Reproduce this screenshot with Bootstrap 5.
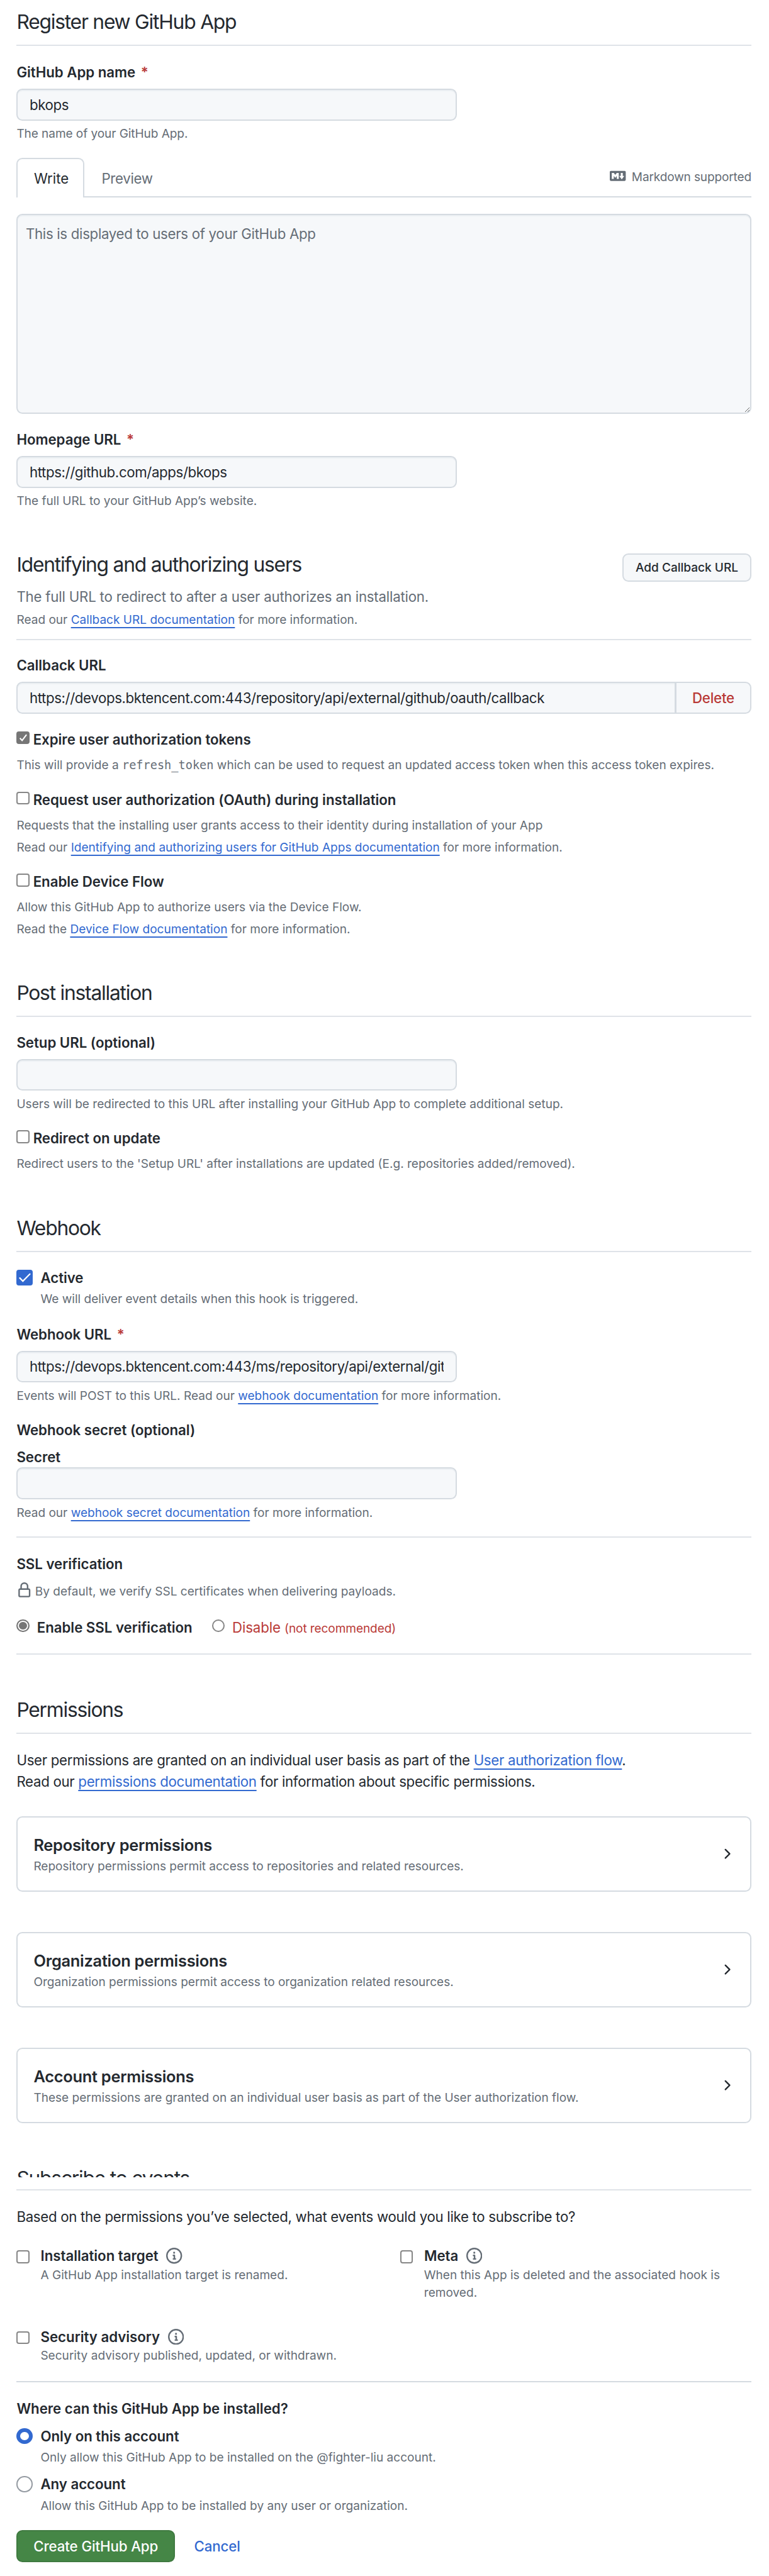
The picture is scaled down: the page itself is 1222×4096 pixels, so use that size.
<!DOCTYPE html>
<html lang="en">
<head>
<meta charset="utf-8">
<meta name="viewport" content="width=device-width, initial-scale=1">
<title>Register new GitHub App</title>
<link href="https://cdn.jsdelivr.net/npm/bootstrap@5.3.0/dist/css/bootstrap.min.css" rel="stylesheet">
<style>
  :root { --ink:#24292f; --muted:#656d76; --line:#d5dbe1; --soft:#dfe3e8; --blue:#3269d0; --danger:#b93a37; --inset:#f6f8fa; }
  body { font-family:Inter, "Liberation Sans", sans-serif; font-size:22.24px; line-height:33px; color:var(--ink); background:#fff; }
  .page { padding:11px 28px 0 26.4px; height:4096px; overflow:hidden; }
  .page p { margin-bottom:0; }
  .page a { color:var(--blue); text-decoration:underline 1.59px; text-underline-offset:4.6px; text-decoration-skip-ink:none; }
  .page a.plain { text-decoration:none; }

  /* headings */
  .sec-title { font-size:31.78px; line-height:48px; font-weight:400; letter-spacing:-1.22px; margin:0; }
  .sec-head { border-bottom:2px solid var(--soft); padding-bottom:12px; }
  .sec-head.spaced { margin-top:63.3px; }
  .sec-head.late { margin-top:64px; }
  .sec-head.cut { margin-top:44.3px; padding-bottom:18.9px; }
  .cut-title { height:41.1px; overflow:hidden; padding-top:18.9px; }
  .sec-sub { color:var(--muted); margin-top:9.3px; letter-spacing:-.2px; }
  .split { border-bottom:2px solid var(--soft); }
  .split.firm { border-color:var(--line); }

  /* text styles */
  .lbl { font-weight:600; line-height:33px; display:block; margin:0; letter-spacing:-.02px; }
  .hint { font-size:19.07px; line-height:29px; color:var(--muted); }
  .req { color:var(--danger); margin-left:3px; }
  .hint code { font:18.6px/1 "DejaVu Sans Mono", monospace; color:inherit; }
  .under { margin-top:6.4px; }
  .tight { letter-spacing:-.08px; }
  .danger-text { color:var(--danger); letter-spacing:-.1px; }
  .danger-text span { font-size:19.07px; line-height:1; }

  /* form controls */
  .form-control { height:50.8px; border:2px solid var(--line); border-radius:9.5px; background:var(--inset); color:var(--ink); font-size:22.24px; letter-spacing:-.37px; padding:0 19px 0 18.5px; box-shadow:inset 0 2px 0 rgba(208,215,222,.25); }
  .field .form-control { margin-top:9.8px; width:699.4px; }
  .field .form-control.flush { margin-top:.3px; }
  textarea.form-control { height:317.6px; margin-top:25.7px; padding:12.9px 12.5px; letter-spacing:-.3px; line-height:33px; }
  textarea.form-control::placeholder { color:#656d76; opacity:1; }
  .form-check-input { width:20.66px; height:20.66px; margin:4px 0 0; float:none; flex:none; border:2px solid #868686; background-color:#fff; }
  .form-check-input[type=checkbox] { border-radius:4px; }
  .form-check-input.gray:checked { background-color:#767676; border-color:#767676; }
  .form-check-input.gray[type=checkbox]:checked { background-image:url("data:image/svg+xml,%3csvg xmlns='http://www.w3.org/2000/svg' viewBox='0 0 20 20'%3e%3cpath fill='none' stroke='%23fff' stroke-width='2.6' d='M3.4 11l4.3 4.6L16.4 4'/%3e%3c/svg%3e"); }
  .form-check-input.gray[type=radio]:checked { background-image:none; box-shadow:inset 0 0 0 2px #fff; }
  .form-check-input.big { width:25.4px; height:25.4px; border-color:#959ba2; }
  .form-check-input.big:checked { background-color:var(--blue); border-color:var(--blue); }
  .form-check-input.big[type=checkbox]:checked { background-image:url("data:image/svg+xml,%3csvg xmlns='http://www.w3.org/2000/svg' viewBox='0 0 20 20'%3e%3cpath fill='none' stroke='%23fff' stroke-width='2.1' stroke-linecap='round' d='M2.4 10.6l4.6 4.7L17.6 4.6'/%3e%3c/svg%3e"); }
  .form-check-input.big[type=radio]:checked { background-image:none; background-color:#fff; border-width:6.36px; }
  .tick { display:flex; gap:5.6px; }
  .tick.wide { gap:11.7px; }
  .tick.big-gap { gap:12.6px; }
  .indent { padding-left:38px; }

  /* write / preview tabs */
  .tabs-bar { margin-top:23.8px; height:63.3px; }
  .tabs-bar .nav-tabs { height:63.3px; border-bottom:2px solid var(--line); }
  .tabs-bar .nav-link { height:63.3px; border:2px solid transparent; border-bottom:0; border-radius:9.5px 9.5px 0 0; color:var(--muted); padding:13.8px 25.5px 0; letter-spacing:-.3px; margin:0; }
  .tabs-bar .nav-link.active { width:107.5px; color:var(--ink); letter-spacing:0; background:#fff; border-color:var(--line); }
  .md-note { gap:9px; letter-spacing:-.15px; height:57px; padding-top:3.2px; }
  .md-note svg { margin-top:-2.5px; }

  /* buttons */
  .btn { font-size:22.24px; font-weight:500; border-radius:9.5px; padding:0; border-width:2px; }
  .btn-add { margin-top:6.2px; width:205px; height:44.5px; font-size:19.07px; background:var(--inset); border-color:var(--line); color:var(--ink); line-height:40px; }
  .btn-del { width:121px; background:var(--inset); border-color:var(--line); color:var(--danger); letter-spacing:-.2px; }
  .btn-go { width:251.7px; height:50.8px; background:#458646; border-color:#3f7a40; color:#fff; letter-spacing:-.09px; }
  .btn-txt { border:0; color:var(--blue); margin-left:30.4px; letter-spacing:-.1px; }

  /* permission cards */
  .perm { height:120.5px; border:2px solid var(--line); border-radius:9.5px; padding:24.9px 24.3px 0 25px; margin-top:63.6px; }
  .perm.first { margin-top:38.6px; }
  .perm h3 { font-size:25.42px; line-height:38px; font-weight:600; letter-spacing:-.27px; margin:0; }
  .perm .hint { letter-spacing:-.02px; }
  .perm svg { margin-top:20.6px; }
  .perm-intro { line-height:33.37px; letter-spacing:-.3px; }

  /* events */
  .ev-first { width:609.4px; flex:none; }
  .ev-row { margin-top:28.9px; }
  .ev-row.next { margin-top:37.9px; }
  .ev .form-check-input { margin-top:7.9px; }
  .ev .lbl { margin-left:17.5px; }
  .ev svg { margin:4.1px 0 0 12.6px; color:var(--muted); }
  .ev .hint { line-height:28.6px; margin-top:.6px; }

  .g36 { margin-top:3.6px; } .g6 { margin-top:6px; } .g99 { margin-top:9.9px; }
  .g11 { margin-top:11px; } .g13 { margin-top:13px; }
  .g235 { margin-top:23.5px; } .g24 { margin-top:24.3px; } .g25 { margin-top:25.3px; }
  .radio-row { gap:31px; }
  svg { fill:currentColor; flex:none; display:block; }
</style>
</head>
<body>
<main class="page container-fluid">
  <div class="sec-head"><h2 class="sec-title">Register new GitHub App</h2></div>

  <div class="field g25">
    <label class="lbl">GitHub App name <span class="req">*</span></label>
    <input class="form-control" type="text" value="bkops">
    <p class="hint under tight">The name of your GitHub App.</p>
  </div>

  <div class="tabs-bar">
    <ul class="nav nav-tabs">
      <li class="nav-item"><a class="nav-link active plain" href="#">Write</a></li>
      <li class="nav-item"><a class="nav-link plain" href="#">Preview</a></li>
      <li class="md-note hint ms-auto d-flex align-items-center">
        <svg width="25.4" height="25.4" viewBox="0 0 16 16"><path d="M14.85 3c.63 0 1.15.52 1.14 1.15v7.7c0 .63-.51 1.15-1.15 1.15H1.15C.52 13 0 12.48 0 11.84V4.15C0 3.52.52 3 1.15 3ZM9 11V5H7L5.5 7 4 5H2v6h2V8l1.5 1.92L7 8v3Zm2.99.5L14.5 8H13V5h-2v3H9.5Z"/></svg>
        <span>Markdown supported</span>
      </li>
    </ul>
  </div>
  <textarea class="form-control" placeholder="This is displayed to users of your GitHub App"></textarea>

  <div class="field g24">
    <label class="lbl">Homepage URL <span class="req">*</span></label>
    <input class="form-control" type="text" value="https://github.com/apps/bkops">
    <p class="hint under">The full URL to your GitHub App’s website.</p>
  </div>

  <div class="sec-head spaced d-flex justify-content-between align-items-start">
    <div>
      <h2 class="sec-title">Identifying and authorizing users</h2>
      <p class="sec-sub">The full URL to redirect to after a user authorizes an installation.</p>
      <p class="hint under mb-1">Read our <a href="#">Callback URL documentation</a> for more information.</p>
    </div>
    <button class="btn btn-add" type="button">Add Callback URL</button>
  </div>

  <div class="g235">
    <label class="lbl">Callback URL</label>
    <div class="input-group g99">
      <input class="form-control" type="text" value="https://devops.bktencent.com:443/repository/api/external/github/oauth/callback">
      <button class="btn btn-del" type="button">Delete</button>
    </div>
  </div>

  <div class="g235">
    <label class="tick"><input class="form-check-input gray" type="checkbox" checked><span class="lbl">Expire user authorization tokens</span></label>
    <p class="hint g99">This will provide a <code>refresh_token</code> which can be used to request an updated access token when this access token expires.</p>
  </div>
  <div class="g24">
    <label class="tick"><input class="form-check-input" type="checkbox"><span class="lbl">Request user authorization (OAuth) during installation</span></label>
    <p class="hint g99">Requests that the installing user grants access to their identity during installation of your App</p>
    <p class="hint g6">Read our <a href="#">Identifying and authorizing users for GitHub Apps documentation</a> for more information.</p>
  </div>
  <div class="g235">
    <label class="tick"><input class="form-check-input" type="checkbox"><span class="lbl">Enable Device Flow</span></label>
    <p class="hint g99">Allow this GitHub App to authorize users via the Device Flow.</p>
    <p class="hint g6">Read the <a href="#">Device Flow documentation</a> for more information.</p>
  </div>

  <div class="sec-head spaced"><h2 class="sec-title">Post installation</h2></div>
  <div class="field g235">
    <label class="lbl">Setup URL (optional)</label>
    <input class="form-control" type="text">
    <p class="hint under">Users will be redirected to this URL after installing your GitHub App to complete additional setup.</p>
  </div>
  <div class="g235">
    <label class="tick"><input class="form-check-input" type="checkbox"><span class="lbl">Redirect on update</span></label>
    <p class="hint g99">Redirect users to the 'Setup URL' after installations are updated (E.g. repositories added/removed).</p>
  </div>

  <div class="sec-head spaced"><h2 class="sec-title">Webhook</h2></div>
  <div class="g24">
    <label class="tick big-gap"><input class="form-check-input big" type="checkbox" checked><span class="lbl">Active</span></label>
    <p class="hint indent g36">We will deliver event details when this hook is triggered.</p>
  </div>
  <div class="field g24">
    <label class="lbl">Webhook URL <span class="req">*</span></label>
    <input class="form-control" type="text" value="https://devops.bktencent.com:443/ms/repository/api/external/github/webhook">
    <p class="hint under">Events will POST to this URL. Read our <a href="#">webhook documentation</a> for more information.</p>
  </div>
  <div class="field g235">
    <span class="lbl">Webhook secret (optional)</span>
    <label class="lbl g99">Secret</label>
    <input class="form-control flush" type="text">
    <p class="hint under">Read our <a href="#">webhook secret documentation</a> for more information.</p>
  </div>
  <div class="split g235"></div>

  <div class="g25">
    <span class="lbl">SSL verification</span>
    <div class="hint d-flex gap-1 g13">
      <svg width="25.4" height="25.4" viewBox="0 0 16 16"><path d="M4 4a4 4 0 0 1 8 0v2h.25c.966 0 1.75.784 1.75 1.75v5.5A1.75 1.75 0 0 1 12.25 15h-8.5A1.75 1.75 0 0 1 2 13.25v-5.5C2 6.784 2.784 6 3.75 6H4Zm8.25 3.5h-8.5a.25.25 0 0 0-.25.25v5.5c0 .138.112.25.25.25h8.5a.25.25 0 0 0 .25-.25v-5.5a.25.25 0 0 0-.25-.25ZM10.5 6V4a2.5 2.5 0 1 0-5 0v2Z"/></svg>
      <span>By default, we verify SSL certificates when delivering payloads.</span>
    </div>
    <div class="d-flex g25 radio-row">
      <label class="tick wide"><input class="form-check-input gray" type="radio" name="ssl" checked><span class="lbl">Enable SSL verification</span></label>
      <label class="tick wide"><input class="form-check-input" type="radio" name="ssl"><span class="danger-text">Disable <span>(not recommended)</span></span></label>
    </div>
  </div>
  <div class="split g25"></div>

  <div class="sec-head late"><h2 class="sec-title">Permissions</h2></div>
  <p class="g25 perm-intro">User permissions are granted on an individual user basis as part of the <a href="#">User authorization flow</a>.<br>Read our <a href="#">permissions documentation</a> for information about specific permissions.</p>

  <section class="perm first d-flex justify-content-between">
    <div><h3>Repository permissions</h3><p class="hint">Repository permissions permit access to repositories and related resources.</p></div>
    <svg width="25.4" height="25.4" viewBox="0 0 16 16"><path d="M6.22 3.22a.75.75 0 0 1 1.06 0l4.25 4.25a.75.75 0 0 1 0 1.06l-4.25 4.25a.751.751 0 0 1-1.042-.018.751.751 0 0 1-.018-1.042L9.94 8 6.22 4.28a.75.75 0 0 1 0-1.06Z"/></svg>
  </section>
  <section class="perm d-flex justify-content-between">
    <div><h3>Organization permissions</h3><p class="hint">Organization permissions permit access to organization related resources.</p></div>
    <svg width="25.4" height="25.4" viewBox="0 0 16 16"><path d="M6.22 3.22a.75.75 0 0 1 1.06 0l4.25 4.25a.75.75 0 0 1 0 1.06l-4.25 4.25a.751.751 0 0 1-1.042-.018.751.751 0 0 1-.018-1.042L9.94 8 6.22 4.28a.75.75 0 0 1 0-1.06Z"/></svg>
  </section>
  <section class="perm d-flex justify-content-between">
    <div><h3>Account permissions</h3><p class="hint">These permissions are granted on an individual user basis as part of the User authorization flow.</p></div>
    <svg width="25.4" height="25.4" viewBox="0 0 16 16"><path d="M6.22 3.22a.75.75 0 0 1 1.06 0l4.25 4.25a.75.75 0 0 1 0 1.06l-4.25 4.25a.751.751 0 0 1-1.042-.018.751.751 0 0 1-.018-1.042L9.94 8 6.22 4.28a.75.75 0 0 1 0-1.06Z"/></svg>
  </section>

  <div class="sec-head cut"><div class="cut-title"><h2 class="sec-title">Subscribe to events</h2></div></div>
  <p class="g25 perm-intro">Based on the permissions you’ve selected, what events would you like to subscribe to?</p>

  <div class="d-flex ev ev-row">
    <div class="ev-first">
      <label class="d-flex"><input class="form-check-input" type="checkbox"><span class="lbl">Installation target</span>
        <svg width="25.4" height="25.4" viewBox="0 0 16 16"><path d="M0 8a8 8 0 1 1 16 0A8 8 0 0 1 0 8Zm8-6.5a6.5 6.5 0 1 0 0 13 6.5 6.5 0 0 0 0-13ZM6.5 7.75A.75.75 0 0 1 7.25 7h1a.75.75 0 0 1 .75.75v2.75h.25a.75.75 0 0 1 0 1.5h-2a.75.75 0 0 1 0-1.5h.25v-2h-.25a.75.75 0 0 1-.75-.75ZM8 6a1 1 0 1 1 0-2 1 1 0 0 1 0 2Z"/></svg></label>
      <p class="hint indent">A GitHub App installation target is renamed.</p>
    </div>
    <div>
      <label class="d-flex"><input class="form-check-input" type="checkbox"><span class="lbl">Meta</span>
        <svg width="25.4" height="25.4" viewBox="0 0 16 16"><path d="M0 8a8 8 0 1 1 16 0A8 8 0 0 1 0 8Zm8-6.5a6.5 6.5 0 1 0 0 13 6.5 6.5 0 0 0 0-13ZM6.5 7.75A.75.75 0 0 1 7.25 7h1a.75.75 0 0 1 .75.75v2.75h.25a.75.75 0 0 1 0 1.5h-2a.75.75 0 0 1 0-1.5h.25v-2h-.25a.75.75 0 0 1-.75-.75ZM8 6a1 1 0 1 1 0-2 1 1 0 0 1 0 2Z"/></svg></label>
      <p class="hint indent">When this App is deleted and the associated hook is removed.</p>
    </div>
  </div>
  <div class="ev ev-row next">
    <label class="d-flex"><input class="form-check-input" type="checkbox"><span class="lbl">Security advisory</span>
      <svg width="25.4" height="25.4" viewBox="0 0 16 16"><path d="M0 8a8 8 0 1 1 16 0A8 8 0 0 1 0 8Zm8-6.5a6.5 6.5 0 1 0 0 13 6.5 6.5 0 0 0 0-13ZM6.5 7.75A.75.75 0 0 1 7.25 7h1a.75.75 0 0 1 .75.75v2.75h.25a.75.75 0 0 1 0 1.5h-2a.75.75 0 0 1 0-1.5h.25v-2h-.25a.75.75 0 0 1-.75-.75ZM8 6a1 1 0 1 1 0-2 1 1 0 0 1 0 2Z"/></svg></label>
    <p class="hint indent">Security advisory published, updated, or withdrawn.</p>
  </div>
  <div class="split firm g25"></div>

  <div class="g24">
    <span class="lbl">Where can this GitHub App be installed?</span>
    <label class="tick big-gap g11"><input class="form-check-input big" type="radio" name="scope" checked><span class="lbl">Only on this account</span></label>
    <p class="hint indent g36">Only allow this GitHub App to be installed on the @fighter-liu account.</p>
    <label class="tick big-gap g11"><input class="form-check-input big" type="radio" name="scope"><span class="lbl">Any account</span></label>
    <p class="hint indent g36">Allow this GitHub App to be installed by any user or organization.</p>
  </div>
  <div class="d-flex align-items-center g24">
    <button class="btn btn-go" type="button">Create GitHub App</button>
    <button class="btn btn-txt" type="button">Cancel</button>
  </div>
</main>
<script src="https://cdn.jsdelivr.net/npm/bootstrap@5.3.0/dist/js/bootstrap.bundle.min.js"></script>
</body>
</html>
